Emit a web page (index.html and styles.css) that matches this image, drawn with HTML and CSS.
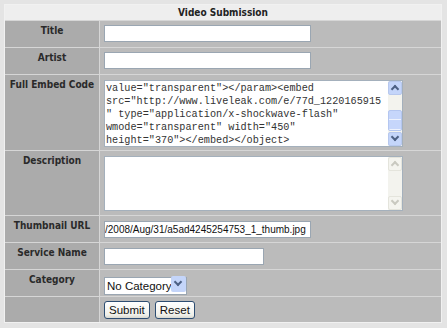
FILE: index.html
```html
<!DOCTYPE html>
<html lang="en">
<head>
<meta charset="UTF-8" />
<title>Video Submission</title>
<link rel="stylesheet" href="styles.css">
</head>
<body>
  <div class="form">
    <div class="head">Video Submission</div>

    <div class="label">Title</div>
    <div class="field"><input class="text" type="text" /></div>

    <div class="label">Artist</div>
    <div class="field"><input class="text" type="text" /></div>

    <div class="label">Full Embed Code</div>
    <div class="field">
      <div class="area code">
        <textarea>value="transparent"&gt;&lt;/param&gt;&lt;embed
src="http://www.liveleak.com/e/77d_1220165915
" type="application/x-shockwave-flash"
wmode="transparent" width="450"
height="370"&gt;&lt;/embed&gt;&lt;/object&gt;</textarea>
        <div class="scroll">
          <span class="btn up"></span>
          <span class="track"><span class="thumb"></span></span>
          <span class="btn down"></span>
        </div>
      </div>
    </div>

    <div class="label">Description</div>
    <div class="field">
      <div class="area desc">
        <textarea></textarea>
        <div class="scroll off">
          <span class="btn up"></span>
          <span class="track"></span>
          <span class="btn down"></span>
        </div>
      </div>
    </div>

    <div class="label">Thumbnail URL</div>
    <div class="field"><input class="text url" type="text" value="/2008/Aug/31/a5ad4245254753_1_thumb.jpg" /></div>

    <div class="label">Service Name</div>
    <div class="field"><input class="text short" type="text" /></div>

    <div class="label">Category</div>
    <div class="field">
      <span class="select">
        <select><option>No Category</option></select>
        <span class="drop"></span>
      </span>
    </div>

    <div class="label"></div>
    <div class="field buttons">
      <button type="button">Submit</button>
      <button type="button">Reset</button>
    </div>
  </div>
</body>
</html>
```

FILE: styles.css
```css
body {
  margin: 0;
  background: #e4e4e4;
  font-family: "DejaVu Sans Condensed", "DejaVu Sans", sans-serif;
}
.form {
  display: grid;
  grid-template-columns: 94px 1fr;
  grid-template-rows: 15px 26px 26px 75px 64px 26px 26px 26px 25px;
  gap: 1px;
  width: 436px;
  margin: 4px 0 0 4px;
  border: 1px solid #f1f1f1;
  background: #d6d6d6;
}
.head {
  grid-column: 1 / -1;
  background: #eeeeee;
  text-align: center;
  font-weight: bold;
  font-size: 10px;
  line-height: 15px;
  color: #222;
}
.label {
  background: #ababab;
  text-align: center;
  font-weight: bold;
  font-size: 10px;
  line-height: 13px;
  color: #2a2a2a;
  padding-top: 3px;
}
.field {
  background: #bbbbbb;
  padding: 4px 4px 0;
}
.text {
  display: block;
  box-sizing: border-box;
  width: 207px;
  height: 17px;
  margin: 0;
  padding: 0 1px;
  border: 1px solid #9aa6b2;
  background: #fff;
  font-family: "Liberation Sans", Arial, sans-serif;
  font-size: 11px;
  color: #111;
}
.url {
  margin-top: 1px;
  padding: 0;
  font-size: 10px;
}
.short {
  width: 160px;
  margin-top: 1px;
}
.area {
  display: flex;
  box-sizing: border-box;
  width: 299px;
  border: 1px solid #a4b0bc;
  background: #fff;
}
.code {
  height: 67px;
  margin-top: 1px;
}
.desc {
  height: 55px;
  margin-top: 1px;
}
.area textarea {
  flex: 1;
  margin: 0;
  padding: 1px 1px;
  border: none;
  resize: none;
  overflow: hidden;
  white-space: pre;
  font-family: "Liberation Mono", "Courier New", monospace;
  font-size: 10.2px;
  line-height: 13px;
  color: #333;
  outline: none;
}
.scroll {
  display: flex;
  flex-direction: column;
  width: 14px;
  background: #f3f3ee;
}
.btn {
  height: 14px;
  background: #c4d5fa;
  border: 1px solid #b7c8ee;
  box-sizing: border-box;
  border-radius: 2px;
  position: relative;
}
.btn::after {
  content: "";
  position: absolute;
  left: 3px;
  top: 4px;
  width: 4px;
  height: 4px;
  border-left: 2px solid #4d6185;
  border-top: 2px solid #4d6185;
  transform: rotate(45deg);
}
.btn.down::after {
  top: 1px;
  transform: rotate(225deg);
}
.track {
  flex: 1;
  position: relative;
}
.thumb {
  position: absolute;
  left: 0;
  right: 0;
  top: 15px;
  height: 21px;
  box-sizing: border-box;
  background: #c6d6fb repeating-linear-gradient(#c6d6fb 0 8px, #eef2fd 8px 9px, #c6d6fb 9px 10px);
  border: 1px solid #b4c6f0;
  border-radius: 2px;
}
.off .btn {
  background: #f4f4ef;
  border-color: #e4e4dc;
}
.off .btn::after {
  border-color: #c9c9c0;
}
.select {
  position: relative;
  display: inline-block;
  margin-top: 1px;
}
.select select {
  appearance: none;
  width: 83px;
  height: 18px;
  margin: 0;
  padding: 0 0 0 2px;
  border: 1px solid #9aa6b2;
  background: #fff;
  font-family: "Liberation Sans", Arial, sans-serif;
  font-size: 11.5px;
  color: #111;
}
.drop {
  position: absolute;
  right: 1px;
  top: 1px;
  width: 15px;
  height: 16px;
  background: #c4d5fa;
  border-radius: 2px;
}
.drop::after {
  content: "";
  position: absolute;
  left: 4px;
  top: 3px;
  width: 4px;
  height: 4px;
  border-right: 2px solid #4d6185;
  border-bottom: 2px solid #4d6185;
  transform: rotate(45deg);
}
.buttons {
  display: flex;
  gap: 5px;
  align-items: flex-start;
}
.buttons button {
  height: 18px;
  padding: 0 4px;
  border: 1px solid #2d4d72;
  border-radius: 3px;
  background: linear-gradient(#ffffff, #f0f0ea 80%, #d8d8d0);
  font-family: "Liberation Sans", Arial, sans-serif;
  font-size: 11.5px;
  color: #111;
}
```
